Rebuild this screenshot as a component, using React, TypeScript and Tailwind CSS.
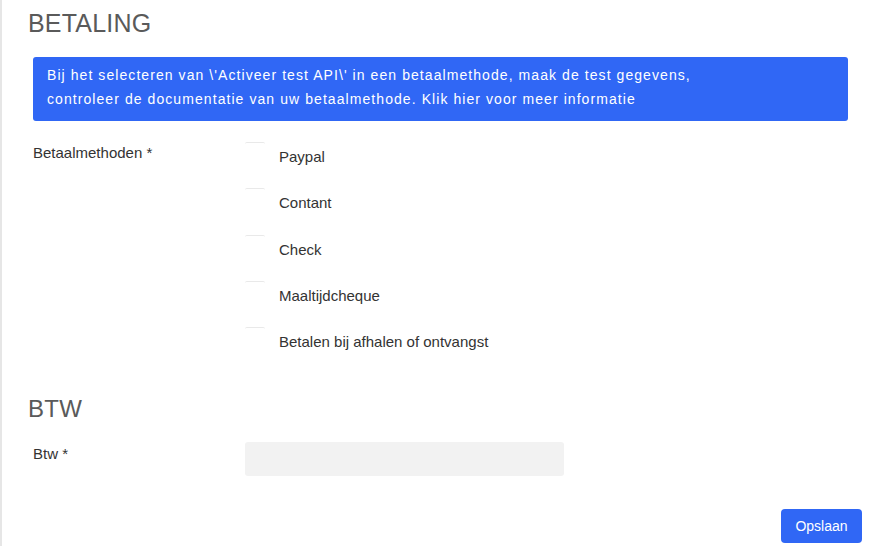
const methods = ["Paypal", "Contant", "Check", "Maaltijdcheque", "Betalen bij afhalen of ontvangst"];

export default function App() {
  return (
    <div className="h-[546px] w-[874px] overflow-hidden border-l-2 border-[#e6e6e6] bg-white font-['Liberation_Sans',Arial,sans-serif] text-[#333]">
      <div className="pl-[26px] pr-[26px] pt-[8px]">
        <h2 className="text-[25px] leading-[30px] tracking-[0.2px] text-[#5a5a5a]">BETALING</h2>

        <div className="ml-[5px] mt-[19px] rounded-[3px] bg-[#3067f5] px-[14px] pb-[10px] pt-[6px] text-[14px] leading-[24px] tracking-[1.07px] text-white">
          Bij het selecteren van \'Activeer test API\' in een betaalmethode, maak de test gegevens,
          <br />
          controleer de documentatie van uw betaalmethode. Klik hier voor meer informatie
        </div>

        <div className="ml-[5px] mt-[23px] flex">
          <div className="w-[212px] text-[15px] leading-[17px]">Betaalmethoden *</div>
          <div className="flex flex-col gap-[29.25px] pt-[4px]">
            {methods.map((m) => (
              <label key={m} className="flex items-start gap-[14px] text-[15px] leading-[17px]">
                <span className="mt-[-6px] h-[20px] w-[20px] rounded-[2px] border-t border-[#e9e9e9]" />
                <span>{m}</span>
              </label>
            ))}
          </div>
        </div>

        <h2 className="mt-[45px] text-[24px] leading-[28px] tracking-[0.3px] text-[#5a5a5a]">BTW</h2>

        <div className="ml-[5px] mt-[19px] flex">
          <div className="w-[212px] pt-[3px] text-[15px] leading-[17px]">Btw *</div>
          <div className="h-[34px] w-[319px] rounded-[3px] bg-[#f2f2f2]" />
        </div>

        <div className="mt-[33px] flex justify-end">
          <button className="mr-[-14px] h-[34px] w-[81px] rounded-[4px] bg-[#3067f5] text-[14px] text-white">
            Opslaan
          </button>
        </div>
      </div>
    </div>
  );
}
